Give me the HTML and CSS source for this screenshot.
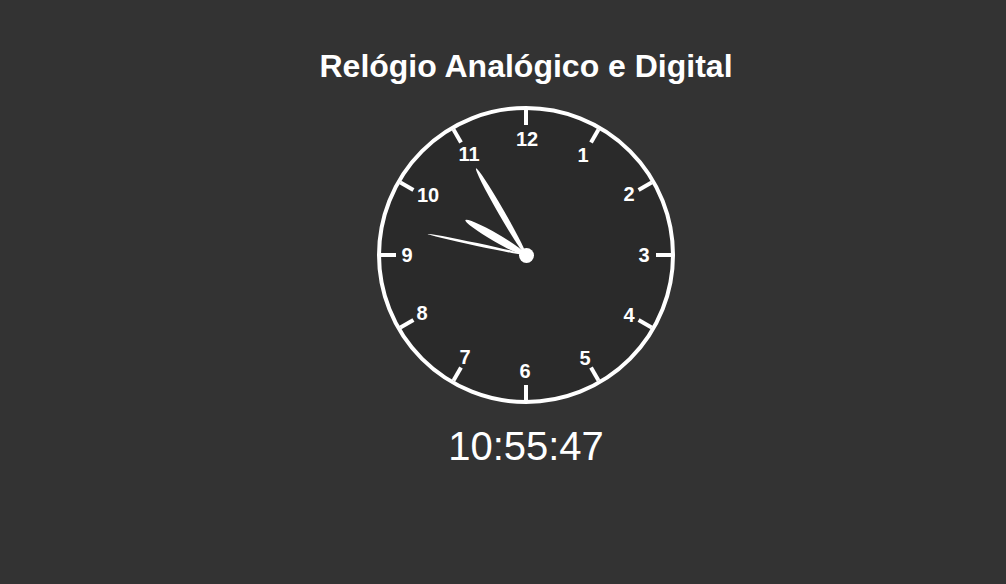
FILE: index.html
```html
<!DOCTYPE html>
<html lang="pt-BR">
<head>
<meta charset="utf-8">
<title>Relógio Analógico e Digital</title>
<link rel="stylesheet" href="styles.css">
</head>
<body>
<main class="page">
  <h1 class="title">Relógio Analógico e Digital</h1>
  <div class="clock">
    <div class="tick" style="transform: rotate(0deg)"></div>
    <div class="tick" style="transform: rotate(30deg)"></div>
    <div class="tick" style="transform: rotate(60deg)"></div>
    <div class="tick" style="transform: rotate(90deg)"></div>
    <div class="tick" style="transform: rotate(120deg)"></div>
    <div class="tick" style="transform: rotate(150deg)"></div>
    <div class="tick" style="transform: rotate(180deg)"></div>
    <div class="tick" style="transform: rotate(210deg)"></div>
    <div class="tick" style="transform: rotate(240deg)"></div>
    <div class="tick" style="transform: rotate(270deg)"></div>
    <div class="tick" style="transform: rotate(300deg)"></div>
    <div class="tick" style="transform: rotate(330deg)"></div>

    <span class="num" style="left:146px; top:29px">12</span>
    <span class="num" style="left:202px; top:45px">1</span>
    <span class="num" style="left:248px; top:84px">2</span>
    <span class="num" style="left:263px; top:145px">3</span>
    <span class="num" style="left:248px; top:205px">4</span>
    <span class="num" style="left:204px; top:248px">5</span>
    <span class="num" style="left:144px; top:261px">6</span>
    <span class="num" style="left:84px; top:247px">7</span>
    <span class="num" style="left:41px; top:203px">8</span>
    <span class="num" style="left:26px; top:145px">9</span>
    <span class="num" style="left:47px; top:85px">10</span>
    <span class="num" style="left:88px; top:44px">11</span>

    <div class="hand hand-hour" style="transform: rotate(300deg)"></div>
    <div class="hand hand-minute" style="transform: rotate(330deg)"></div>
    <div class="hand hand-second" style="transform: rotate(282deg)"></div>
    <div class="cap"></div>
  </div>
  <div class="digital">10:55:47</div>
</main>
</body>
</html>
```

FILE: styles.css
```css
html, body {
  margin: 0;
  padding: 0;
  background: #333333;
  color: #ffffff;
  font-family: "Liberation Sans", Arial, sans-serif;
}

.page {
  display: flex;
  flex-direction: column;
  align-items: center;
  padding: 48px 0 0 46px;
}

.title {
  margin: 0;
  font-size: 32px;
  font-weight: bold;
  line-height: 37px;
}

.clock {
  position: relative;
  width: 290px;
  height: 290px;
  margin-top: 21px;
  border: 4px solid #ffffff;
  border-radius: 50%;
  background: #2a2a2a;
}

.tick {
  position: absolute;
  left: 143px;
  top: 0;
  width: 4px;
  height: 15px;
  background: #ffffff;
  transform-origin: 2px 145px;
}

.num {
  position: absolute;
  transform: translate(-50%, -50%);
  font-size: 20px;
  font-weight: bold;
  line-height: 1;
  color: #ffffff;
}

.hand {
  position: absolute;
  left: 145px;
  bottom: 145px;
  background: #ffffff;
  border-radius: 50%;
  transform-origin: 50% 100%;
}

.hand-hour {
  width: 8px;
  height: 70px;
  margin-left: -4px;
}

.hand-minute {
  width: 6px;
  height: 100px;
  margin-left: -3px;
}

.hand-second {
  width: 3px;
  height: 101px;
  margin-left: -1.5px;
}

.cap {
  position: absolute;
  left: 137.5px;
  top: 137.5px;
  width: 15px;
  height: 15px;
  border-radius: 50%;
  background: #ffffff;
}

.digital {
  margin-top: 19px;
  font-size: 40px;
  line-height: 46px;
}
```
